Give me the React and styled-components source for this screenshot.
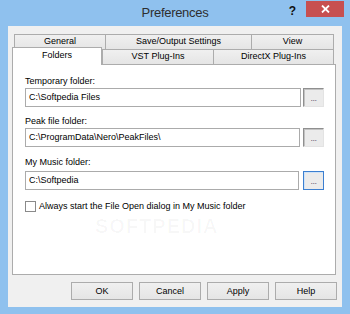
import React from "react";
import styled, { createGlobalStyle } from "styled-components";

const Global = createGlobalStyle`
  html, body { margin: 0; padding: 0; background: #8fc1ee; }
  body { font-family: "Liberation Sans", Arial, sans-serif; }
  * { box-sizing: border-box; }
`;

const Window = styled.div`
  width: 350px;
  height: 314px;
  background: #8fc1ee;
  display: flex;
  flex-direction: column;
  padding: 0 8px 7px 8px;
`;

const TitleBar = styled.div`
  height: 26px;
  flex: 0 0 26px;
  display: grid;
  grid-template-columns: 1fr auto 1fr;
`;

const Title = styled.div`
  grid-column: 2;
  font-size: 13px;
  letter-spacing: -0.3px;
  line-height: 26px;
  color: #2e2e2e;
`;

const Controls = styled.div`
  grid-column: 3;
  display: flex;
  justify-content: flex-end;
  align-items: flex-start;
  margin-right: -2px;
`;

const Help = styled.div`
  font-size: 12px;
  font-weight: bold;
  color: #111;
  line-height: 12px;
  margin-top: 5px;
  margin-right: 10px;
`;

const Close = styled.div`
  width: 38px;
  height: 16px;
  margin-top: 1px;
  background: #c75050;
  display: flex;
  align-items: center;
  justify-content: center;
`;

const Client = styled.div`
  flex: 1;
  background: #f0f0f0;
  display: flex;
  flex-direction: column;
  padding: 8px 6px 7px 4px;
`;

const TabRow = styled.div`
  display: flex;
  padding: 0 2px;
  height: 15px;
  flex: 0 0 15px;
  position: relative;
`;

const Tab = styled.div`
  width: ${(p) => p.$w}px;
  flex: 0 0 ${(p) => p.$w}px;
  height: 15px;
  border: 1px solid #acacac;
  border-bottom: none;
  border-right: ${(p) => (p.$last ? "1px solid #acacac" : "none")};
  background: linear-gradient(#f0f0f0, #e5e5e5);
  font-size: 9px;
  line-height: 13px;
  text-align: center;
  color: #000;
`;

const ActiveTab = styled.div`
  width: ${(p) => p.$w + 2}px;
  flex: 0 0 ${(p) => p.$w + 2}px;
  margin-left: -2px;
  margin-top: -2px;
  height: 18px;
  border: 1px solid #acacac;
  border-bottom: none;
  background: #fff;
  font-size: 9px;
  line-height: 14px;
  text-align: center;
  color: #000;
  position: relative;
  z-index: 2;
`;

const Panel = styled.div`
  flex: 1;
  background: #fff;
  border: 1px solid #acacac;
  padding: 11px 11px 0 12px;
  display: flex;
  flex-direction: column;
  position: relative;
`;

const Label = styled.div`
  font-size: 9px;
  line-height: 11px;
  color: #000;
  margin-top: ${(p) => p.$mt || 0}px;
  margin-bottom: ${(p) => p.$mb || 1}px;
`;

const FieldRow = styled.div`
  display: flex;
  gap: 2px;
  align-items: flex-start;
`;

const Input = styled.div`
  width: 276px;
  height: 19px;
  border: 1px solid #ababab;
  background: #fff;
  font-size: 9px;
  line-height: 17px;
  padding-left: 3px;
  color: #000;
`;

const Browse = styled.div`
  width: 21px;
  height: 19px;
  margin-left: ${(p) => p.$ml || 0}px;
  border: 1px solid;
  border-color: ${(p) =>
    p.$focus ? "#3c7fd0" : "#8f8f8f #e3e3e3 #e3e3e3 #8f8f8f"};
  box-shadow: inset 1px 1px 0 ${(p) => (p.$focus ? "#cfe3f8" : "#c2c2c2")};
  background: #ebebeb;
  font-size: 9px;
  line-height: 19px;
  text-align: center;
  color: #6a5a7a;
  letter-spacing: -0.5px;
`;

const CheckRow = styled.div`
  display: flex;
  align-items: center;
  gap: 3px;
  margin-top: 11px;
`;

const Box = styled.div`
  width: 11px;
  height: 11px;
  border: 1px solid #8a8a8a;
  background: #fff;
`;

const CheckText = styled.div`
  font-size: 9px;
  line-height: 11px;
  color: #000;
`;

const Watermark = styled.div`
  position: absolute;
  left: 82px;
  top: 150px;
  font-size: 20px;
  font-weight: bold;
  letter-spacing: 1px;
  color: rgba(0, 0, 0, 0.03);
  pointer-events: none;
`;

const ButtonRow = styled.div`
  display: flex;
  justify-content: flex-end;
  gap: 6px;
  margin-top: 7px;
  margin-right: -1px;
`;

const Button = styled.div`
  width: 62px;
  height: 18px;
  border: 1px solid #acacac;
  background: linear-gradient(#f0f0f0, #e5e5e5);
  font-size: 9px;
  line-height: 16px;
  text-align: center;
  color: #000;
`;

export default function App() {
  return (
    <>
      <Global />
      <Window>
        <TitleBar>
          <Title>Preferences</Title>
          <Controls>
            <Help>?</Help>
            <Close>
              <svg width="9" height="8" viewBox="0 0 9 8">
                <path d="M1 0.5 L8 7.5 M8 0.5 L1 7.5" stroke="#fff" strokeWidth="1.8" />
              </svg>
            </Close>
          </Controls>
        </TitleBar>
        <Client>
          <TabRow>
            <Tab $w={91}>General</Tab>
            <Tab $w={146}>Save/Output Settings</Tab>
            <Tab $w={83} $last>View</Tab>
          </TabRow>
          <TabRow>
            <ActiveTab $w={88}>Folders</ActiveTab>
            <Tab $w={111}>VST Plug-Ins</Tab>
            <Tab $w={121} $last>DirectX Plug-Ins</Tab>
          </TabRow>
          <Panel>
            <Label>Temporary folder:</Label>
            <FieldRow>
              <Input>C:\Softpedia Files</Input>
              <Browse>...</Browse>
            </FieldRow>
            <Label $mt={9}>Peak file folder:</Label>
            <FieldRow>
              <Input>C:\ProgramData\Nero\PeakFiles\</Input>
              <Browse $ml={1}>...</Browse>
            </FieldRow>
            <Label $mt={10} $mb={3}>My Music folder:</Label>
            <FieldRow>
              <Input>C:\Softpedia</Input>
              <Browse $ml={2} $focus>...</Browse>
            </FieldRow>
            <CheckRow>
              <Box />
              <CheckText>Always start the File Open dialog in My Music folder</CheckText>
            </CheckRow>
            <Watermark>SOFTPEDIA</Watermark>
          </Panel>
          <ButtonRow>
            <Button>OK</Button>
            <Button>Cancel</Button>
            <Button>Apply</Button>
            <Button>Help</Button>
          </ButtonRow>
        </Client>
      </Window>
    </>
  );
}
